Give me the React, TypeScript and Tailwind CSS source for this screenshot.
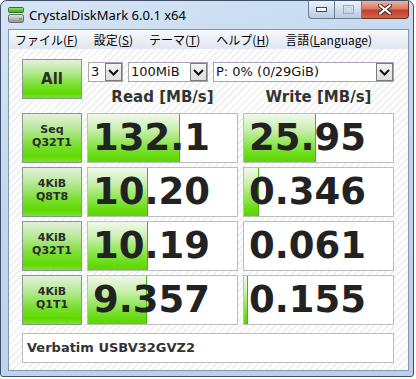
import React from 'react';

type Row = {
  label: [string, string];
  read: string;
  write: string;
  readBar: number;
  writeBar: number;
};

const rows: Row[] = [
  { label: ['Seq', 'Q32T1'], read: '132.1', write: '25.95', readBar: 92, writeBar: 72 },
  { label: ['4KiB', 'Q8T8'], read: '10.20', write: '0.346', readBar: 60, writeBar: 15 },
  { label: ['4KiB', 'Q32T1'], read: '10.19', write: '0.061', readBar: 60, writeBar: 0 },
  { label: ['4KiB', 'Q1T1'], read: '9.357', write: '0.155', readBar: 59, writeBar: 4 },
];

const menu: [string, string, string][] = [
  ['ファイル(', 'F', ')'],
  ['設定(', 'S', ')'],
  ['テーマ(', 'T', ')'],
  ['ヘルプ(', 'H', ')'],
  ['言語(', 'L', 'anguage)'],
];

const greenBtn =
  'border border-[#86998a] bg-[linear-gradient(to_bottom,#e3f1dc_0%,#b9e99a_30%,#7fe03a_62%,#5fd900_88%,#7be330_100%)] text-[#2b2b2b] font-bold font-["DejaVu_Sans",sans-serif]';

function Chevron() {
  return (
    <svg width="11" height="7" viewBox="0 0 11 7">
      <polyline points="1,1 5.5,5.5 10,1" fill="none" stroke="#111" strokeWidth="2" />
    </svg>
  );
}

function Select({ value, width }: { value: string; width: string }) {
  return (
    <div className={`flex h-[20px] items-stretch border border-[#a7a7a7] bg-white ${width}`}>
      <span className="flex-1 pl-[2px] text-[13px] leading-[18px] text-[#111] font-['DejaVu_Sans',sans-serif]">
        {value}
      </span>
      <div className="flex w-[17px] items-center justify-center border border-[#7b7b7b] bg-[linear-gradient(to_bottom,#f4f4f4,#dcdcdc)]">
        <Chevron />
      </div>
    </div>
  );
}

function ValueBox({ value, bar }: { value: string; bar: number }) {
  return (
    <div className="relative h-[50px] w-[151px] overflow-hidden border border-[#bdbdbd] bg-white">
      {bar > 0 && (
        <div
          className="absolute bottom-0 left-0 top-0 border-r border-[#45b60c] bg-[linear-gradient(to_bottom,#f0f8ec_0%,#cdf0b4_30%,#95e65c_60%,#68dc14_85%,#5cd600_100%)]"
          style={{ width: bar }}
        />
      )}
      <span className="relative block pl-[5px] text-[37px] font-bold leading-[48px] text-[#222] font-['DejaVu_Sans',sans-serif]">
        {value}
      </span>
    </div>
  );
}

function TitleIcon() {
  return (
    <svg width="16" height="16" viewBox="0 0 16 16">
      <defs>
        <linearGradient id="g" x1="0" y1="0" x2="0" y2="1">
          <stop offset="0" stopColor="#9be86c" />
          <stop offset="1" stopColor="#2fa21a" />
        </linearGradient>
        <linearGradient id="d" x1="0" y1="0" x2="0" y2="1">
          <stop offset="0" stopColor="#e6e6e6" />
          <stop offset="1" stopColor="#8c8c8c" />
        </linearGradient>
      </defs>
      <rect x="0.5" y="0.5" width="15" height="5" rx="1" fill="url(#g)" stroke="#2c7a1c" />
      <rect x="0.5" y="7.5" width="15" height="8" rx="2" fill="url(#d)" stroke="#6a6a6a" />
      <rect x="11" y="11" width="3" height="2" fill="#3ecb2a" />
    </svg>
  );
}

function CaptionButtons() {
  return (
    <div className="ml-auto flex h-[18px]">
      <div className="flex w-[26px] items-center justify-center rounded-bl-[4px] border border-r-0 border-t-0 border-[#6a7c93] bg-[linear-gradient(to_bottom,#eef3f9,#d0deee_50%,#b9cce4)]">
        <svg width="11" height="5" viewBox="0 0 11 5">
          <rect x="0.5" y="0.5" width="10" height="4" fill="#fff" stroke="#3d4a5a" />
        </svg>
      </div>
      <div className="flex w-[28px] items-center justify-center border border-t-0 border-[#6a7c93] bg-[linear-gradient(to_bottom,#eef3f9,#d0deee_50%,#b9cce4)]">
        <svg width="11" height="9" viewBox="0 0 11 9">
          <rect x="0.5" y="0.5" width="10" height="8" fill="none" stroke="#9aa8b8" />
          <rect x="2.5" y="2.5" width="6" height="4" fill="none" stroke="#c8d2de" />
        </svg>
      </div>
      <div className="flex w-[47px] items-center justify-center rounded-br-[4px] border border-l-0 border-t-0 border-[#6b3128] bg-[linear-gradient(to_bottom,#ebb3a5,#dc7a62_45%,#c4402a_55%,#d0634a)]">
        <svg width="14" height="11" viewBox="0 0 14 11">
          <path d="M2 1.5 L12 9.5 M12 1.5 L2 9.5" stroke="#3a2a2a" strokeWidth="4" strokeLinecap="square" />
          <path d="M2 1.5 L12 9.5 M12 1.5 L2 9.5" stroke="#fff" strokeWidth="2" strokeLinecap="square" />
        </svg>
      </div>
    </div>
  );
}

export default function App() {
  return (
    <div className="h-[379px] w-[416px] overflow-hidden bg-white">
      <div className="flex h-[377px] w-[414px] flex-col rounded-b-[3px] rounded-t-[7px] border border-[#3f5068] bg-[linear-gradient(160deg,#d6e5f5_0%,#c2d7ee_40%,#b7cfea_100%)] pb-[5px] pl-[7px] pr-[4px]">
        {/* title bar */}
        <div className="flex h-[28px] items-start">
          <div className="mt-[6px]">
            <TitleIcon />
          </div>
          <span className="ml-[5px] mt-[5px] text-[13px] leading-[18px] text-black font-['Noto_Sans',sans-serif]">
            CrystalDiskMark 6.0.1 x64
          </span>
          <CaptionButtons />
        </div>

        <div className="flex flex-1 flex-col border border-[#8797ab]">
          {/* menu */}
          <div className="flex h-[19px] items-center gap-[16px] bg-[linear-gradient(to_bottom,#f7f9fc,#dfe6ef)] pl-[6px] text-[12px] leading-[19px] text-black font-['Noto_Sans_CJK_JP',sans-serif]">
            {menu.map(([a, k, b]) => (
              <span key={a}>
                {a}
                <span className="underline">{k}</span>
                {b}
              </span>
            ))}
          </div>

          {/* client */}
          <div className="flex-1 bg-[repeating-linear-gradient(135deg,#ffffff_0px,#ffffff_3px,#f1f1f1_3px,#f1f1f1_5px)] pl-[13px] pt-[10px]">
            <div className="flex h-[54px]">
              <div className={`flex h-[40px] w-[60px] items-center justify-center text-[15px] ${greenBtn}`}>
                All
              </div>
              <div className="ml-[5px] flex flex-col">
                <div className="ml-px mt-[3px] flex gap-[5px]">
                  <Select value="3" width="w-[35px]" />
                  <Select value="100MiB" width="w-[80px]" />
                  <Select value="P: 0% (0/29GiB)" width="w-[181px]" />
                </div>
                <div className="mt-[6px] flex gap-[5px] text-[15px] font-bold leading-[18px] text-[#333] font-['DejaVu_Sans',sans-serif]">
                  <span className="w-[151px] text-center">Read [MB/s]</span>
                  <span className="w-[151px] text-center">Write [MB/s]</span>
                </div>
              </div>
            </div>

            <div className="flex flex-col gap-[4px]">
              {rows.map((r) => (
                <div key={r.label.join()} className="flex gap-[5px]">
                  <div
                    className={`flex h-[50px] w-[60px] flex-col items-center justify-center pb-[4px] text-[11px] leading-[13px] ${greenBtn}`}
                  >
                    <span>{r.label[0]}</span>
                    <span>{r.label[1]}</span>
                  </div>
                  <ValueBox value={r.read} bar={r.readBar} />
                  <ValueBox value={r.write} bar={r.writeBar} />
                </div>
              ))}
            </div>

            <div className="mt-[8px] flex h-[30px] w-[372px] items-center border border-[#bdbdbd] bg-white pl-[4px] text-[13px] font-bold text-[#333] font-['DejaVu_Sans',sans-serif]">
              Verbatim USBV32GVZ2
            </div>
          </div>
        </div>
      </div>
    </div>
  );
}
